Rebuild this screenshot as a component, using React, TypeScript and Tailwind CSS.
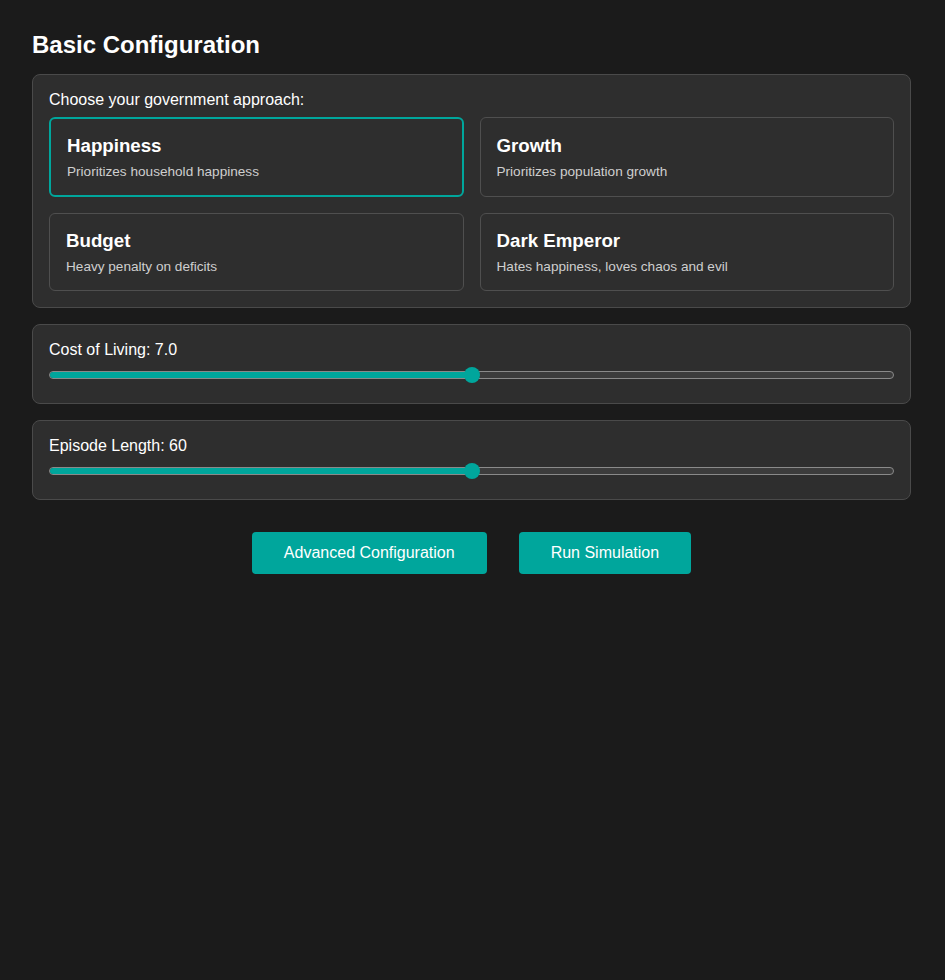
import * as React from "react";

const approaches = [
  { key: "happiness", title: "Happiness", description: "Prioritizes household happiness" },
  { key: "growth", title: "Growth", description: "Prioritizes population growth" },
  { key: "budget", title: "Budget", description: "Heavy penalty on deficits" },
  { key: "emperor", title: "Dark Emperor", description: "Hates happiness, loves chaos and evil" },
];

function Slider({ value, min, max }: { value: number; min: number; max: number }) {
  const pct = ((value - min) / (max - min)) * 100;
  return (
    <div className="relative h-4 flex items-center">
      <div className="w-full h-2 rounded-full border border-[#8a8a8a] bg-[#3c3c3c] overflow-hidden">
        <div className="h-full bg-[#00a69c]" style={{ width: `${pct}%` }} />
      </div>
      <div
        className="absolute top-0 w-4 h-4 -ml-2 rounded-full bg-[#00a69c]"
        style={{ left: `${pct}%` }}
      />
    </div>
  );
}

export default function App() {
  const [selected, setSelected] = React.useState("happiness");

  return (
    <div className="min-h-screen bg-[#1b1b1b] text-white font-['Liberation_Sans',Arial,sans-serif]">
      <div className="pl-8 pr-[34px] pt-[30px]">
        <h2 className="text-2xl leading-[29px] font-bold mb-[15px]">Basic Configuration</h2>

        {/* Government approach */}
        <div className="bg-[#2e2e2e] border border-[#4a4a4a] rounded-lg p-4">
          <p className="text-base leading-[18px] mb-2">Choose your government approach:</p>
          <div className="grid grid-cols-2 gap-4">
            {approaches.map((a) => {
              const active = selected === a.key;
              return (
                <button
                  key={a.key}
                  onClick={() => setSelected(a.key)}
                  className={
                    active
                      ? "text-left rounded-md border-2 border-[#00a69c] bg-[#2e2e2e] p-4"
                      : "text-left rounded-md border border-[#4f4f4f] bg-[#2e2e2e] p-4"
                  }
                >
                  <div className="text-[18.7px] leading-[21px] font-bold mb-2">{a.title}</div>
                  <div className="text-[13.6px] leading-[15px] text-[#cfcfcf]">{a.description}</div>
                </button>
              );
            })}
          </div>
        </div>

        {/* Cost of living */}
        <div className="mt-4 bg-[#2e2e2e] border border-[#4a4a4a] rounded-lg px-4 pt-4 pb-5">
          <p className="text-base leading-[18px] mb-2">Cost of Living: 7.0</p>
          <Slider value={7} min={4} max={10} />
        </div>

        {/* Episode length */}
        <div className="mt-4 bg-[#2e2e2e] border border-[#4a4a4a] rounded-lg px-4 pt-4 pb-5">
          <p className="text-base leading-[18px] mb-2">Episode Length: 60</p>
          <Slider value={60} min={20} max={100} />
        </div>

        <div className="flex justify-center gap-8 mt-8">
          <button className="bg-[#00a69c] text-white text-base leading-[18px] px-8 py-3 rounded">
            Advanced Configuration
          </button>
          <button className="bg-[#00a69c] text-white text-base leading-[18px] px-8 py-3 rounded">
            Run Simulation
          </button>
        </div>
      </div>
    </div>
  );
}
